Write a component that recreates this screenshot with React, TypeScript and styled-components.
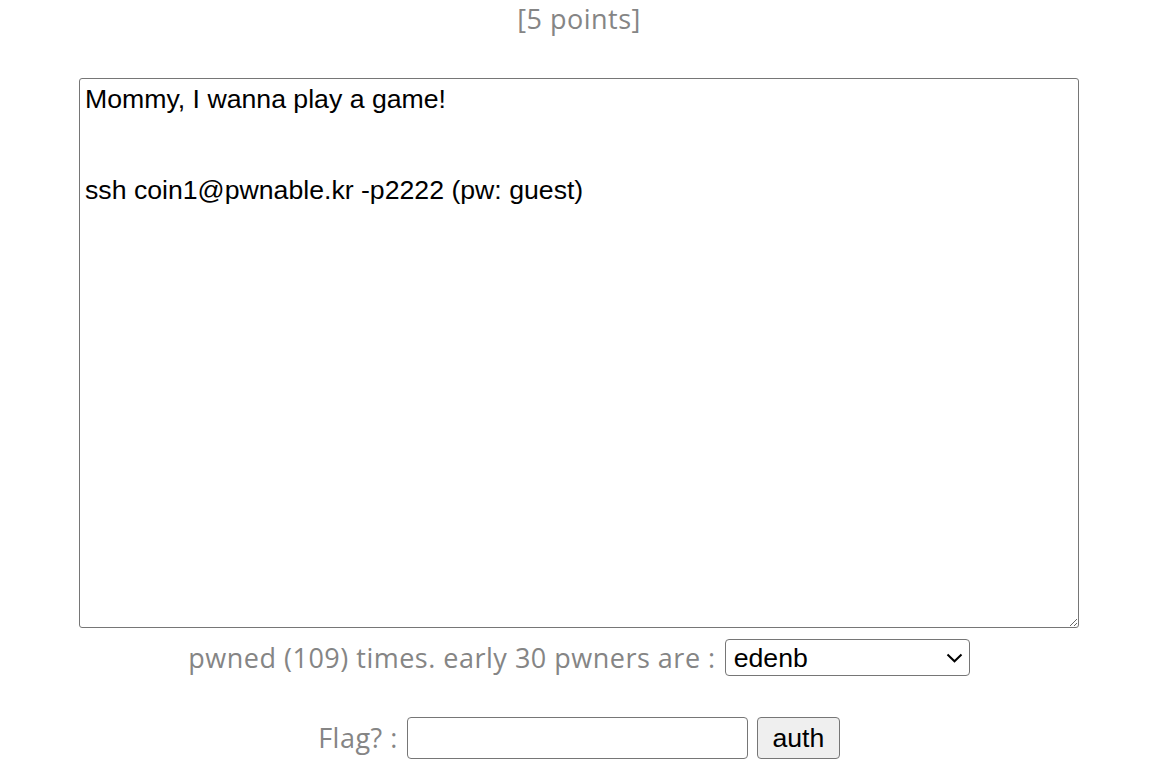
import styled, { createGlobalStyle } from 'styled-components'

const GlobalStyle = createGlobalStyle`
  html, body {
    margin: 0;
    padding: 0;
    background: #ffffff;
  }
`

const pwners = ['edenb', 'rkdghdud', 'tyeolrik', 'ismal', 'lotus']

export default function App() {
  return (
    <Page>
      <GlobalStyle />
      <Points>[5 points]</Points>
      <Description
        readOnly
        defaultValue={'Mommy, I wanna play a game!\n\n\nssh coin1@pwnable.kr -p2222 (pw: guest)'}
      />
      <InfoRow>
        <Label>pwned (109) times. early 30 pwners are :</Label>
        <SelectWrap>
          <PwnerSelect defaultValue="edenb">
            {pwners.map((p) => (
              <option key={p} value={p}>
                {p}
              </option>
            ))}
          </PwnerSelect>
          <Chevron width="17" height="10" viewBox="0 0 17 10">
            <path d="M1.5 1.5 L8.5 8.3 L15.5 1.5" fill="none" stroke="#000" strokeWidth="2" />
          </Chevron>
        </SelectWrap>
      </InfoRow>
      <FlagRow>
        <Label>Flag? :</Label>
        <FlagInput type="text" />
        <AuthButton>auth</AuthButton>
      </FlagRow>
    </Page>
  )
}

const Page = styled.div`
  width: 1158px;
  display: flex;
  flex-direction: column;
  align-items: center;
  font-family: 'Open Sans', 'Lato', sans-serif;
`
const Points = styled.div`
  margin-top: 2px;
  font-size: 27px;
  letter-spacing: 0.5px;
  line-height: 34px;
  color: #858585;
`
const Description = styled.textarea`
  box-sizing: border-box;
  margin-top: 42px;
  width: 1000px;
  height: 550px;
  padding: 5px 5px 2px;
  border: 1px solid #767676;
  border-radius: 3px;
  font-family: 'Liberation Sans', Arial, sans-serif;
  font-size: 26.67px;
  line-height: 30.3px;
  color: #000000;
  resize: both;
  outline: none;
`
const InfoRow = styled.div`
  display: flex;
  align-items: center;
  gap: 9px;
  margin-top: 11px;
`
const FlagRow = styled.div`
  display: flex;
  align-items: center;
  gap: 9px;
  margin-top: 41px;
`
const Label = styled.span`
  font-size: 27px;
  letter-spacing: 0.5px;
  line-height: 36px;
  color: #858585;
`
const SelectWrap = styled.div`
  position: relative;
  display: flex;
`
const PwnerSelect = styled.select`
  box-sizing: border-box;
  appearance: none;
  width: 245px;
  height: 37px;
  padding: 0 8px;
  border: 1px solid #767676;
  border-radius: 4px;
  background: #ffffff;
  font-family: 'Liberation Sans', Arial, sans-serif;
  font-size: 26.67px;
  color: #000000;
`
const Chevron = styled.svg`
  position: absolute;
  right: 7px;
  top: 14px;
  pointer-events: none;
`
const FlagInput = styled.input`
  box-sizing: border-box;
  width: 341px;
  height: 42px;
  border: 1px solid #767676;
  border-radius: 4px;
  font-size: 24px;
`
const AuthButton = styled.button`
  box-sizing: border-box;
  height: 42px;
  width: 83px;
  border: 1px solid #767676;
  border-radius: 4px;
  background: #efefef;
  font-family: 'Liberation Sans', Arial, sans-serif;
  font-size: 26.67px;
  color: #000000;
`
